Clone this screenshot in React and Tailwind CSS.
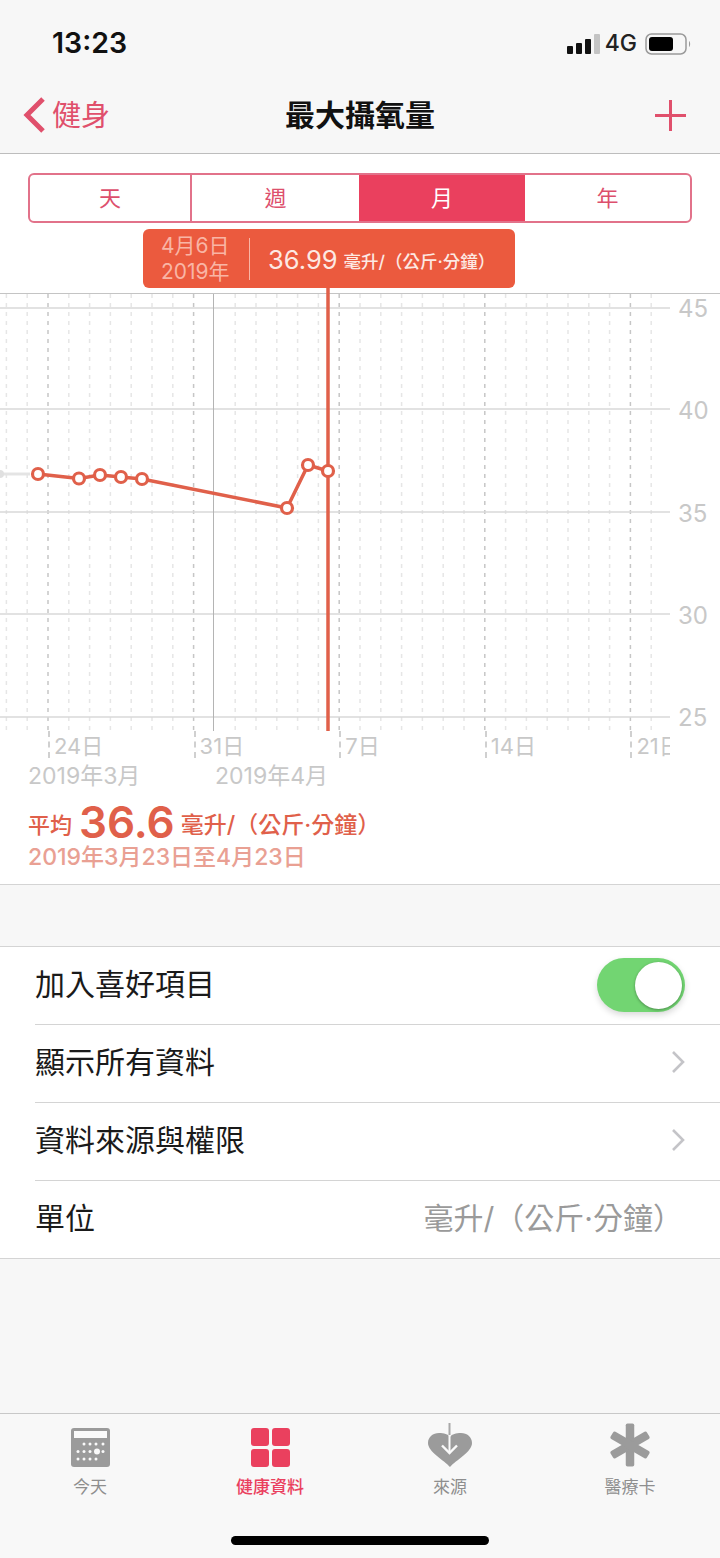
import React from 'react';

const POINTS = [[38, 474], [79, 478.5], [100, 475], [121, 477], [142, 479], [287, 508], [308, 465], [328, 471]];
const H_LINES = [308, 409, 512, 614, 717];

// the dashed day lines, every 7th one is darker
const dayLines = [];
for (let n = -2; n < 30; n++) {
  if (n === 8) continue;
  dayLines.push({ x: 48 + n * 20.8, major: n % 7 === 0 });
}

const Chart = () => (
  <svg className="block w-[670px] h-[443px] shrink-0" viewBox="0 288 670 443" fill="none">
    {dayLines.map((l) => (
      <line key={l.x} x1={l.x} x2={l.x} y1="294" y2="731" stroke={l.major ? '#c6c6c6' : '#e6e6e6'} strokeWidth="1.5" strokeDasharray="4 5" />
    ))}
    <line x1="0" x2="670" y1="293.5" y2="293.5" stroke="#c4c4c4" strokeWidth="1" />
    {H_LINES.map((y) => (
      <line key={y} x1="0" x2="670" y1={y} y2={y} stroke="#d9d9d9" strokeWidth="1.5" />
    ))}
    <line x1="213.5" x2="213.5" y1="294" y2="731" stroke="#b4b4b4" strokeWidth="1" />
    <line x1="0" x2="30" y1="474" y2="474" stroke="#e4e4e4" strokeWidth="3" />
    <circle cx="0" cy="474" r="4" fill="#e0e0e0" />
    <line x1="328" x2="328" y1="288" y2="731" stroke="#e0604a" strokeWidth="3.5" />
    <polyline points={POINTS.map((p) => p.join(',')).join(' ')} stroke="#e0604a" strokeWidth="3.5" strokeLinejoin="round" />
    {POINTS.map((p) => (
      <circle key={p[0]} cx={p[0]} cy={p[1]} r="5.5" fill="white" stroke="#e0604a" strokeWidth="3.2" />
    ))}
  </svg>
);

const Chevron = () => (
  <svg className="w-[14px] h-[24px]" viewBox="0 0 14 24" fill="none">
    <path d="M2 2 L12 12 L2 22" stroke="#c4c4c8" strokeWidth="2.6" />
  </svg>
);

const Row = ({ label, last, children }) => (
  <div className="pl-[35px]">
    <div className={`flex items-center justify-between pb-[3px] ${last ? 'h-[77px]' : 'h-[78px] border-b border-[#d4d4d4]'}`}>
      <span className="text-[30px] leading-none text-[#1a1a1a]">{label}</span>
      {children}
    </div>
  </div>
);

const CalendarIcon = () => (
  <svg className="w-[39px] h-[39px]" viewBox="0 0 39 39">
    <rect width="39" height="39" rx="3" fill="#9b9b9b" />
    <rect x="3" y="3" width="33" height="7" fill="#fafafa" />
    {[13, 19, 25, 32].map((x) => <circle key={x} cx={x} cy="16" r="1.5" fill="#fafafa" />)}
    {[7, 13, 19, 32].map((x) => <circle key={x} cx={x} cy="23.5" r="1.5" fill="#fafafa" />)}
    <circle cx="26" cy="23.5" r="3" fill="#fafafa" />
    {[7, 13, 19, 25].map((x) => <circle key={x} cx={x} cy="31" r="1.5" fill="#fafafa" />)}
  </svg>
);

const GridIcon = () => (
  <div className="grid grid-cols-2 gap-[3px] w-[39px] h-[39px]">
    <div className="rounded-[3px] bg-[#ea405e]" />
    <div className="rounded-[3px] bg-[#ea405e]" />
    <div className="rounded-[3px] bg-[#ea405e]" />
    <div className="rounded-[3px] bg-[#ea405e]" />
  </div>
);

const HeartIcon = () => (
  <svg className="w-[44px] h-[44px]" viewBox="0 0 44 44" fill="none">
    <path d="M22 44 C16 37 0 29 0 20 C0 14 5 10 11 10 C16 10 20 11 22 14 C24 11 28 10 33 10 C39 10 44 14 44 20 C44 29 28 37 22 44Z" fill="#9b9b9b" />
    <line x1="21.5" x2="21.5" y1="0" y2="12" stroke="#a8a8a8" strokeWidth="2" />
    <line x1="21.5" x2="21.5" y1="12" y2="29" stroke="#fafafa" strokeWidth="2" />
    <path d="M14 22.5 L21.5 30 L29 22.5" stroke="#fafafa" strokeWidth="2.4" />
  </svg>
);

const StarIcon = () => (
  <svg className="w-[42px] h-[44px]" viewBox="0 0 42 44" fill="#9b9b9b">
    <rect x="16.75" y="0.5" width="8.5" height="43" rx="1.8" />
    <rect x="16.75" y="1" width="8.5" height="42" rx="1.8" transform="rotate(60 21 22)" />
    <rect x="16.75" y="1" width="8.5" height="42" rx="1.8" transform="rotate(-60 21 22)" />
  </svg>
);

const Tab = ({ label, active, children }) => (
  <div className="flex flex-col items-center">
    <div className="h-[44px] flex items-end">{children}</div>
    <span className={`mt-[10px] text-[17px] leading-[20px] ${active ? 'font-medium text-[#ea405e]' : 'text-[#8e8e8e]'}`}>{label}</span>
  </div>
);

const App = () => {
  return (
    <div className="w-[720px] h-[1558px] flex flex-col overflow-hidden bg-[#f7f7f7] font-['Inter','Noto_Sans_CJK_TC',sans-serif]">
      {/* status bar */}
      <div className="h-[86px] shrink-0 pt-[1px] flex items-center justify-between pl-[52px] pr-[29px]">
        <span className="text-[28.5px] leading-none font-semibold text-[#111]">13:23</span>
        <div className="flex items-center">
          <div className="flex items-end gap-[3px] h-[20px]">
            <div className="w-[6px] h-[8px] rounded-[1px] bg-[#111]" />
            <div className="w-[6px] h-[11px] rounded-[1px] bg-[#111]" />
            <div className="w-[6px] h-[15px] rounded-[1px] bg-[#111]" />
            <div className="w-[6px] h-[20px] rounded-[1px] bg-[#c4c4c4]" />
          </div>
          <span className="ml-[5px] text-[23px] leading-none font-medium text-[#222]">4G</span>
          <svg className="ml-[8px] w-[46px] h-[22px]" viewBox="0 0 46 22" fill="none">
            <rect x="1" y="1" width="40" height="20" rx="5.5" stroke="#9a9a9a" strokeWidth="1.5" />
            <rect x="4" y="4" width="24" height="14" rx="3" fill="#000" />
            <path d="M44 8 C45.5 9 45.5 13 44 14Z" fill="#9a9a9a" />
          </svg>
        </div>
      </div>

      {/* nav bar */}
      <div className="h-[68px] shrink-0 pb-[9px] grid grid-cols-3 items-center border-b border-[#bdbdbd]">
        <div className="flex items-center pl-[22px]">
          <svg className="w-[24px] h-[38px]" viewBox="0 0 24 38" fill="none">
            <path d="M21 3 L5 19 L21 35" stroke="#e0506c" strokeWidth="5" />
          </svg>
          <span className="ml-[6px] text-[29px] leading-none text-[#e0506c]">健身</span>
        </div>
        <span className="text-center text-[30px] leading-none font-semibold text-[#111] whitespace-nowrap">最大攝氧量</span>
        <div className="flex justify-end pr-[34px]">
          <svg className="w-[31px] h-[31px]" viewBox="0 0 31 31" stroke="#e0506c" strokeWidth="3">
            <line x1="15.5" x2="15.5" y1="0" y2="31" />
            <line x1="0" x2="31" y1="15.5" y2="15.5" />
          </svg>
        </div>
      </div>

      {/* chart card */}
      <div className="h-[731px] shrink-0 bg-white border-b border-[#d4d4d4]">
        <div className="mt-[19px] mx-[28px] h-[50px] grid grid-cols-[162px_167px_166px_1fr] rounded-md border-2 border-[#e2728a] overflow-hidden text-[22px] text-[#dd4f6d]">
          <div className="flex items-center justify-center border-r-2 border-[#e2728a]">天</div>
          <div className="flex items-center justify-center">週</div>
          <div className="flex items-center justify-center bg-[#ea405e] text-white">月</div>
          <div className="flex items-center justify-center">年</div>
        </div>

        <div className="mt-[6px] ml-[143px] w-[372px] h-[59px] rounded-md bg-[#eb5a3e] flex items-center">
          <div className="w-[106px] pl-[18px] text-[21px] leading-[26px] text-[#f9b5a5] whitespace-nowrap">
            <div>4月6日</div>
            <div>2019年</div>
          </div>
          <div className="w-px h-[42px] bg-[#f9b5a5]" />
          <span className="ml-[18px] mt-[3px] text-[25.5px] leading-none text-[#fde9e3]">36.99</span>
          <span className="ml-[6px] mt-[6px] text-[17.5px] leading-none font-medium text-[#fde9e3] whitespace-nowrap">毫升/（公斤·分鐘）</span>
        </div>

        <div className="flex">
          <Chart />
          <div className="flex-1 mt-[5px] border-t border-[#c4c4c4] pt-[3px] pl-[8px] flex flex-col gap-[78.25px] text-[24px] leading-[24px] text-[#c8c8c8]">
            <span>45</span>
            <span>40</span>
            <span>35</span>
            <span>30</span>
            <span>25</span>
          </div>
        </div>

        {/* x axis */}
        <div className="w-[670px] pl-[48px] flex overflow-hidden text-[22px] leading-[22px] text-[#c8c8c8]">
          {['24日', '31日', '7日', '14日', '21日'].map((d) => (
            <div key={d} className="w-[145.6px] shrink-0 h-[27px] border-l-2 border-dashed border-[#d0d0d0] pl-[4px] pt-[4px] whitespace-nowrap">{d}</div>
          ))}
        </div>
        <div className="mt-[6px] pl-[28px] flex text-[23px] leading-[24px] text-[#c8c8c8]">
          <span className="w-[187px]">2019年3月</span>
          <span>2019年4月</span>
        </div>

        <div className="mt-[11px] pl-[28px] h-[46px] flex items-center text-[#e0604a] whitespace-nowrap">
          <span className="text-[22px] leading-none font-medium mt-[6px]">平均</span>
          <span className="ml-[7px] text-[44px] leading-none font-semibold">36.6</span>
          <span className="ml-[6px] text-[23px] leading-none font-medium mt-[6px]">毫升/（公斤·分鐘）</span>
        </div>
        <div className="pl-[28px] text-[23px] leading-[24px] font-medium text-[#e9a093]">2019年3月23日至4月23日</div>
      </div>

      <div className="h-[61px] shrink-0" />

      {/* settings list */}
      <div className="shrink-0 bg-white border-y border-[#d4d4d4]">
        <Row label="加入喜好項目">
          <div className="mr-[35px] mt-[2px] w-[88px] h-[54px] rounded-full bg-[#72d572] flex items-center justify-end pr-[3px] shadow-[0_3px_6px_rgba(0,0,0,0.15)]">
            <div className="w-[47px] h-[47px] rounded-full bg-white shadow-[0_1px_3px_rgba(0,0,0,0.35)]" />
          </div>
        </Row>
        <Row label="顯示所有資料">
          <div className="mr-[35px] flex"><Chevron /></div>
        </Row>
        <Row label="資料來源與權限">
          <div className="mr-[35px] flex"><Chevron /></div>
        </Row>
        <Row label="單位" last>
          <span className="mr-[37px] text-[30px] leading-none text-[#9a9a9a] whitespace-nowrap">毫升/（公斤·分鐘）</span>
        </Row>
      </div>

      <div className="flex-1" />

      {/* tab bar */}
      <div className="h-[145px] shrink-0 bg-[#f8f8f8] border-t border-[#c8c8c8] flex flex-col">
        <div className="pt-[9px] grid grid-cols-4">
          <Tab label="今天"><CalendarIcon /></Tab>
          <Tab label="健康資料" active><GridIcon /></Tab>
          <Tab label="來源"><HeartIcon /></Tab>
          <Tab label="醫療卡"><StarIcon /></Tab>
        </div>
        <div className="mt-[39px] mx-auto w-[258px] h-[9px] rounded-full bg-black" />
      </div>
    </div>
  );
};

export default App;
